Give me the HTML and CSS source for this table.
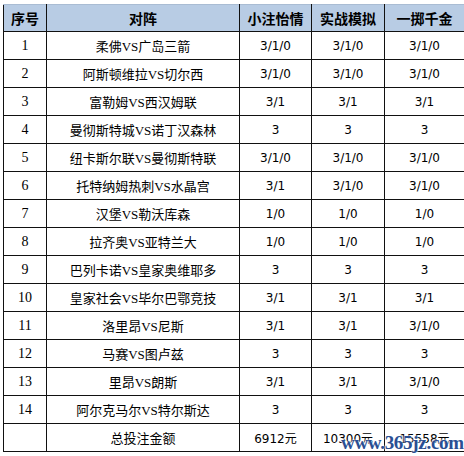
FILE: index.html
```html
<!DOCTYPE html>
<html lang="zh-CN">
<head>
    <meta charset="UTF-8">
    <title>投注方案</title>
    <link rel="stylesheet" href="styles.css">
</head>
<body>
    <div class="sheet">
        <table class="plan">
            <colgroup>
                <col class="c-no">
                <col class="c-match">
                <col class="c-a">
                <col class="c-b">
                <col class="c-c">
            </colgroup>
            <thead>
                <tr>
                    <th>序号</th>
                    <th>对阵</th>
                    <th>小注怡情</th>
                    <th>实战模拟</th>
                    <th>一掷千金</th>
                </tr>
            </thead>
            <tbody>
                <tr><td class="no">1</td><td class="match">柔佛VS广岛三箭</td><td>3/1/0</td><td>3/1/0</td><td>3/1/0</td></tr>
                <tr><td class="no">2</td><td class="match">阿斯顿维拉VS切尔西</td><td>3/1/0</td><td>3/1/0</td><td>3/1/0</td></tr>
                <tr><td class="no">3</td><td class="match">富勒姆VS西汉姆联</td><td>3/1</td><td>3/1</td><td>3/1</td></tr>
                <tr><td class="no">4</td><td class="match">曼彻斯特城VS诺丁汉森林</td><td>3</td><td>3</td><td>3</td></tr>
                <tr><td class="no">5</td><td class="match">纽卡斯尔联VS曼彻斯特联</td><td>3/1/0</td><td>3/1/0</td><td>3/1/0</td></tr>
                <tr><td class="no">6</td><td class="match">托特纳姆热刺VS水晶宫</td><td>3/1</td><td>3/1/0</td><td>3/1/0</td></tr>
                <tr><td class="no">7</td><td class="match">汉堡VS勒沃库森</td><td>1/0</td><td>1/0</td><td>1/0</td></tr>
                <tr><td class="no">8</td><td class="match">拉齐奥VS亚特兰大</td><td>1/0</td><td>1/0</td><td>1/0</td></tr>
                <tr><td class="no">9</td><td class="match">巴列卡诺VS皇家奥维耶多</td><td>3</td><td>3</td><td>3</td></tr>
                <tr><td class="no">10</td><td class="match">皇家社会VS毕尔巴鄂竞技</td><td>3/1</td><td>3/1</td><td>3/1</td></tr>
                <tr><td class="no">11</td><td class="match">洛里昂VS尼斯</td><td>3/1</td><td>3/1</td><td>3/1/0</td></tr>
                <tr><td class="no">12</td><td class="match">马赛VS图卢兹</td><td>3</td><td>3</td><td>3</td></tr>
                <tr><td class="no">13</td><td class="match">里昂VS朗斯</td><td>3/1</td><td>3/1</td><td>3/1/0</td></tr>
                <tr><td class="no">14</td><td class="match">阿尔克马尔VS特尔斯达</td><td>3</td><td>3</td><td>3</td></tr>
                <tr class="total"><td class="no"></td><td class="match">总投注金额</td><td>6912元</td><td>10300元</td><td>15558元</td></tr>
            </tbody>
        </table>
        <div class="mark">www.365jz.com</div>
    </div>
</body>
</html>
```

FILE: styles.css
```css
* {
    box-sizing: border-box;
    margin: 0;
    padding: 0;
}

body {
    background-color: #fff;
    font-family: "DejaVu Sans", "Noto Sans CJK SC", sans-serif;
    color: #000;
}

.sheet {
    position: relative;
    padding: 4px 0 0 3px;
    width: 464px;
    height: 456px;
}

.plan {
    border-collapse: collapse;
    table-layout: fixed;
    width: 461px;
}

.c-no { width: 43px; }
.c-match { width: 193px; }
.c-a { width: 72px; }
.c-b { width: 73px; }
.c-c { width: 80px; }

.plan th,
.plan td {
    border: 1px solid #111;
    text-align: center;
    vertical-align: middle;
    white-space: nowrap;
    overflow: hidden;
}

.plan th {
    height: 27px;
    background-color: #b8cce4;
    border-top-color: #a9bcd3;
    font-family: "Noto Sans CJK SC", sans-serif;
    font-size: 14px;
    font-weight: 700;
}

.plan td {
    height: 28px;
    font-size: 12px;
}

.plan td.no {
    font-family: "Liberation Serif", "Noto Sans CJK SC", serif;
    font-size: 14px;
}

.plan td.match {
    font-family: "Liberation Serif", "Noto Sans CJK SC", serif;
    font-size: 13px;
}

.mark {
    position: absolute;
    left: 341px;
    top: 432px;
    font-family: "Liberation Serif", serif;
    font-size: 19px;
    font-weight: 700;
    color: #2a4f93;
    text-shadow: 0 0 2px #fff, 0 0 2px #fff;
    letter-spacing: -0.3px;
}
```
